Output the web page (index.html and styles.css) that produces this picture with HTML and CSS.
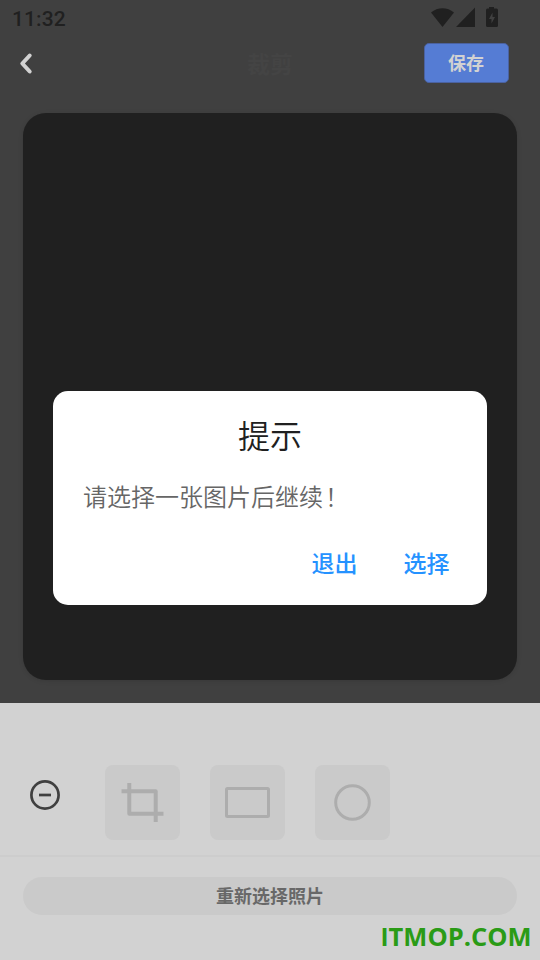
FILE: index.html
```
<!DOCTYPE html>
<html lang="zh-CN">
<head>
<meta charset="utf-8">
<title>裁剪</title>
<link rel="stylesheet" href="styles.css">
</head>
<body>
<div class="screen">
  <div class="status">
    <span class="time">11:32</span>
    <svg class="signals" width="70" height="22" viewBox="0 0 70 22">
      <path d="M1 6.5C7.5.8 17.500.8 24 6.500L12.500 21Z"/>
      <path d="M45 1.500V21H26Z"/>
      <path fill-rule="evenodd" d="M59 1h5v1.500h2.500q1.500 0 1.500 1.500v15.500q0 1.500-1.500 1.500h-9q-1.500 0-1.500-1.500V4q0-1.500 1.500-1.500H59ZM62.500 6.500 59 13h2.500v4.500L65 11h-2.500Z"/>
    </svg>
  </div>
  <header class="bar">
    <svg class="back" width="16" height="24" viewBox="0 0 16 24"><path d="M12.700 4.500 5.300 12.500l7.400 8"/></svg>
    <h1 class="heading">裁剪</h1>
    <button class="save">保存</button>
  </header>
  <main class="canvas"></main>
  <section class="panel">
    <div class="tools">
      <svg class="minus" width="30" height="30" viewBox="0 0 30 30"><circle cx="15" cy="15" r="13.600"/><path d="M9 15h12"/></svg>
      <div class="tile"><svg width="75" height="75" viewBox="0 0 75 75"><path stroke-width="4" d="M24.300 18v30.800H58.500M16.500 26.300h34.200V57"/></svg></div>
      <div class="tile"><svg width="75" height="75" viewBox="0 0 75 75"><rect x="16.500" y="23.500" width="42" height="28" rx="1" stroke-width="3"/></svg></div>
      <div class="tile"><svg width="75" height="75" viewBox="0 0 75 75"><circle cx="37.500" cy="37.500" r="16.800" stroke-width="3"/></svg></div>
    </div>
    <div class="footer"><button class="reselect">重新选择照片</button></div>
  </section>
  <div class="dialog" role="dialog">
    <h2 class="title">提示</h2>
    <p class="message">请选择一张图片后继续<span class="mark">！</span></p>
    <div class="actions"><span>退出</span><span>选择</span></div>
  </div>
  <div class="watermark"><span class="initial">I</span>TMOP.COM</div>
</div>
</body>
</html>
```
FILE: styles.css
```
* { box-sizing: border-box; }
body { margin: 0; font-family: "Noto Sans CJK SC", sans-serif; }
h1, h2, p { margin: 0; }
button { border: 0; padding: 0; font-family: inherit; }
svg { display: block; flex: none; }
.screen { position: relative; display: flex; flex-direction: column; width: 540px; height: 960px; overflow: hidden; background: #404040; }
.status { height: 38px; display: flex; justify-content: space-between; padding: 6px 40px 0 12px; }
.time { padding-top: 1px; font: 500 21px/25px Roboto, sans-serif; letter-spacing: .1px; color: #202020; }
.signals { fill: #202020; }
.bar { height: 50px; display: grid; grid-template-columns: 116px 1fr 116px; align-items: center; }
.back { margin-left: 17px; fill: none; stroke: #d2d2d2; stroke-width: 4; stroke-linecap: round; stroke-linejoin: round; }
.heading { text-align: center; font-size: 23px; line-height: 34px; font-weight: 700; color: #444; }
.save { width: 85px; height: 40px; border: 1px solid #4b62a0; border-radius: 5px; background: #557cd4; color: #d2d2d2; font-size: 18px; line-height: 36px; font-weight: 700; padding: 0 1px 2px 0; }
.canvas { height: 567px; margin: 25px 23px 23px; border-radius: 23px; background: #202020; box-shadow: 0 1px 5px rgba(0,0,0,.12); }
.panel { flex: 1; background: #d2d2d2; }
.tools { height: 154px; padding: 62px 30px 0; display: flex; gap: 30px; border-bottom: 2px solid #cdcdcd; }
.minus { margin: 15px 15px 0 0; fill: none; stroke: #404040; stroke-width: 2.700; }
.tile { width: 75px; height: 75px; border-radius: 8px; background: #cacaca; fill: none; stroke: #adadad; stroke-linejoin: round; }
.footer { padding: 20px 23px; }
.reselect { display: block; width: 100%; height: 38px; border-radius: 19px; background: #cacaca; color: #686868; font-size: 18px; line-height: 36px; font-weight: 700; padding-bottom: 2px; }
.dialog { position: absolute; left: 53px; top: 391px; width: 434px; height: 214px; padding: 20px 30px 0; border-radius: 15px; background: #fff; }
.title { text-align: center; font-size: 32px; line-height: 46px; font-weight: 350; color: #202020; }
.message { margin-top: 21px; font-size: 24px; line-height: 36px; font-weight: 350; color: #666; white-space: nowrap; }
.mark { margin-left: 2px; }
.actions { margin-top: 31px; padding-right: 7.500px; display: flex; justify-content: flex-end; gap: 46px; color: #2592ff; font-size: 23px; line-height: 34px; font-weight: 500; }
.watermark { position: absolute; left: 381px; top: 919px; font: 700 25.500px/34px "Open Sans", sans-serif; color: #2a9b16; white-space: nowrap; }
.initial { font-family: "Liberation Sans", sans-serif; margin-right: .5px; }
```
